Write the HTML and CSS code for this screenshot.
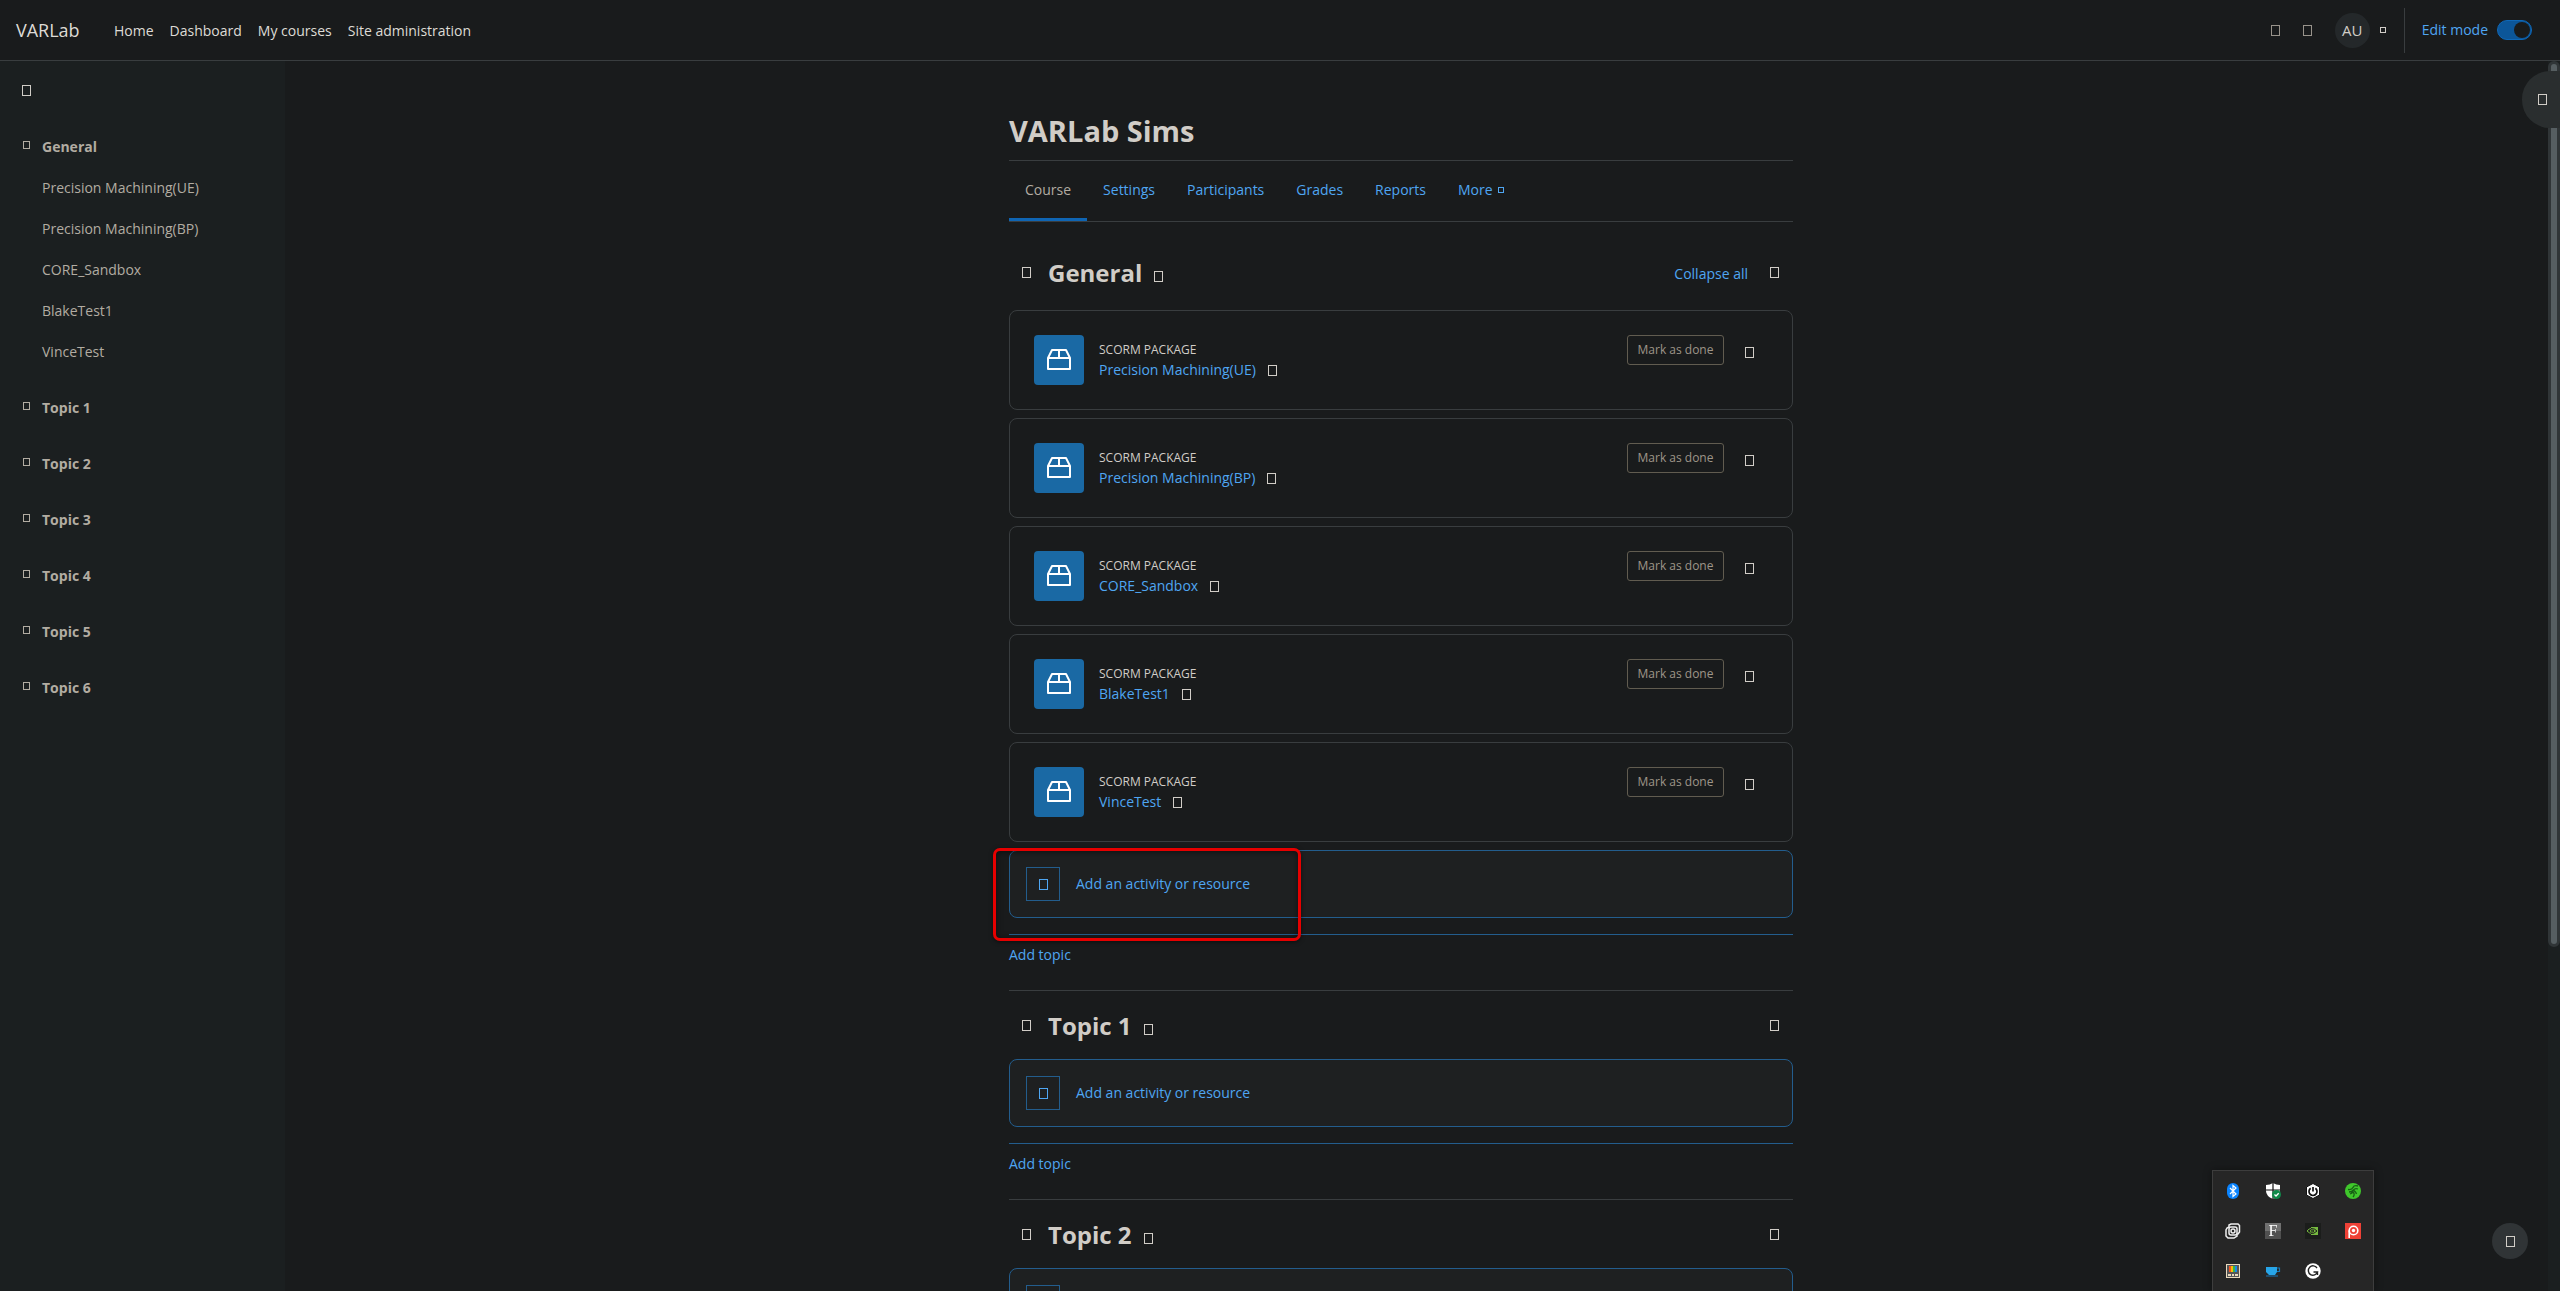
FILE: index.html
```html
<!DOCTYPE html>
<html lang="en">
<head>
<meta charset="utf-8">
<title>VARLab Sims</title>
<link rel="stylesheet" href="styles.css">
</head>
<body>
<svg class="defs" aria-hidden="true">
  <symbol id="package" viewBox="0 0 24 24">
    <path d="M1 10 5 2H19L23 10V21H1ZM1 10H23M12 2V10" fill="none" stroke="#fff" stroke-width="2" stroke-linejoin="round"/>
  </symbol>
</svg>

<header class="navbar">
  <a class="brand" href="#">VARLab</a>
  <nav class="primary">
    <a href="#">Home</a>
    <a href="#">Dashboard</a>
    <a href="#">My courses</a>
    <a href="#">Site administration</a>
  </nav>
  <div class="usertools">
    <button class="plain" aria-label="Notifications"><span class="glyph dim"></span></button>
    <button class="plain" aria-label="Messages"><span class="glyph dim"></span></button>
    <button class="plain user" aria-label="User menu"><span class="avatar">AU</span><span class="glyph tiny"></span></button>
  </div>
  <div class="editmode">
    <label for="editmode">Edit mode</label>
    <input id="editmode" class="switch" type="checkbox" role="switch" checked>
  </div>
</header>

<div class="layout">
  <aside class="index">
    <div class="index-head"><button class="plain" aria-label="Close course index"><span class="glyph"></span></button></div>
    <nav>
      <section>
        <h2><span class="glyph small"></span><a href="#general">General</a></h2>
        <a class="item" href="#">Precision Machining(UE)</a>
        <a class="item" href="#">Precision Machining(BP)</a>
        <a class="item" href="#">CORE_Sandbox</a>
        <a class="item" href="#">BlakeTest1</a>
        <a class="item" href="#">VinceTest</a>
      </section>
      <section><h2><span class="glyph small"></span><a href="#topic1">Topic 1</a></h2></section>
      <section><h2><span class="glyph small"></span><a href="#topic2">Topic 2</a></h2></section>
      <section><h2><span class="glyph small"></span><a href="#">Topic 3</a></h2></section>
      <section><h2><span class="glyph small"></span><a href="#">Topic 4</a></h2></section>
      <section><h2><span class="glyph small"></span><a href="#">Topic 5</a></h2></section>
      <section><h2><span class="glyph small"></span><a href="#">Topic 6</a></h2></section>
    </nav>
  </aside>

  <main class="page">
    <div class="content">
      <h1>VARLab Sims</h1>
      <nav class="tabs">
        <a class="active" href="#">Course</a>
        <a href="#">Settings</a>
        <a href="#">Participants</a>
        <a href="#">Grades</a>
        <a href="#">Reports</a>
        <a href="#">More<span class="glyph tiny"></span></a>
      </nav>

      <section class="topic first" id="general">
        <div class="topic-head">
          <button class="plain" aria-label="Collapse"><span class="glyph"></span></button>
          <h2>General</h2>
          <button class="plain edit" aria-label="Edit section name"><span class="glyph"></span></button>
          <a class="collapse" href="#">Collapse all</a>
          <button class="plain menu" aria-label="Section menu"><span class="glyph"></span></button>
        </div>
        <ul class="activities">
          <li class="activity">
            <span class="tile"><svg><use href="#package"/></svg></span>
            <div class="about"><span class="kind">SCORM PACKAGE</span><span class="name"><a href="#">Precision Machining(UE)</a><button class="plain" aria-label="Edit title"><span class="glyph"></span></button></span></div>
            <button class="done">Mark as done</button>
            <button class="plain more" aria-label="Activity menu"><span class="glyph"></span></button>
          </li>
          <li class="activity">
            <span class="tile"><svg><use href="#package"/></svg></span>
            <div class="about"><span class="kind">SCORM PACKAGE</span><span class="name"><a href="#">Precision Machining(BP)</a><button class="plain" aria-label="Edit title"><span class="glyph"></span></button></span></div>
            <button class="done">Mark as done</button>
            <button class="plain more" aria-label="Activity menu"><span class="glyph"></span></button>
          </li>
          <li class="activity">
            <span class="tile"><svg><use href="#package"/></svg></span>
            <div class="about"><span class="kind">SCORM PACKAGE</span><span class="name"><a href="#">CORE_Sandbox</a><button class="plain" aria-label="Edit title"><span class="glyph"></span></button></span></div>
            <button class="done">Mark as done</button>
            <button class="plain more" aria-label="Activity menu"><span class="glyph"></span></button>
          </li>
          <li class="activity">
            <span class="tile"><svg><use href="#package"/></svg></span>
            <div class="about"><span class="kind">SCORM PACKAGE</span><span class="name"><a href="#">BlakeTest1</a><button class="plain" aria-label="Edit title"><span class="glyph"></span></button></span></div>
            <button class="done">Mark as done</button>
            <button class="plain more" aria-label="Activity menu"><span class="glyph"></span></button>
          </li>
          <li class="activity">
            <span class="tile"><svg><use href="#package"/></svg></span>
            <div class="about"><span class="kind">SCORM PACKAGE</span><span class="name"><a href="#">VinceTest</a><button class="plain" aria-label="Edit title"><span class="glyph"></span></button></span></div>
            <button class="done">Mark as done</button>
            <button class="plain more" aria-label="Activity menu"><span class="glyph"></span></button>
          </li>
        </ul>
        <div class="add-wrap">
          <button class="add"><span class="plus"><span class="glyph"></span></span>Add an activity or resource</button>
          <div class="highlight"></div>
        </div>
        <div class="add-topic"><a href="#">Add topic</a></div>
      </section>

      <section class="topic" id="topic1">
        <div class="topic-head">
          <button class="plain" aria-label="Collapse"><span class="glyph"></span></button>
          <h2>Topic 1</h2>
          <button class="plain edit" aria-label="Edit section name"><span class="glyph"></span></button>
          <button class="plain menu" aria-label="Section menu"><span class="glyph"></span></button>
        </div>
        <button class="add"><span class="plus"><span class="glyph"></span></span>Add an activity or resource</button>
        <div class="add-topic"><a href="#">Add topic</a></div>
      </section>

      <section class="topic" id="topic2">
        <div class="topic-head">
          <button class="plain" aria-label="Collapse"><span class="glyph"></span></button>
          <h2>Topic 2</h2>
          <button class="plain edit" aria-label="Edit section name"><span class="glyph"></span></button>
          <button class="plain menu" aria-label="Section menu"><span class="glyph"></span></button>
        </div>
        <button class="add" aria-label="Add an activity or resource"><span class="plus"><span class="glyph"></span></span></button>
      </section>
    </div>
  </main>
  <div class="scroll"><div class="thumb"></div></div>
  <button class="blocks" aria-label="Open block drawer"><span class="glyph"></span></button>
</div>

<button class="help" aria-label="Help"><span class="glyph"></span></button>

<div class="tray">
  <svg viewBox="0 0 16 16"><rect x="2" width="12" height="16" rx="6" fill="#0a84ff"/><path d="M5 5 11 11 8 13.500V2.500L11 5 5 11" fill="none" stroke="#fff" stroke-width="1.200"/></svg>
  <svg viewBox="0 0 16 16"><path d="M8 0Q11 2 15 2V8Q15 13 8 16 1 13 1 8V2Q5 2 8 0Z" fill="#fff"/><path d="M8 0V16M1 7H15" stroke="#111" stroke-width="1.200"/><circle cx="11.500" cy="11.500" r="4.500" fill="#108a4a"/><path d="M9.500 11.500 11 13 13.700 10.200" fill="none" stroke="#fff" stroke-width="1.300"/></svg>
  <svg viewBox="0 0 16 16"><path d="M8 .5 14.500 4V12L8 15.500 1.500 12V4Z" fill="#fff" stroke="#111"/><path d="M5.600 5.300A4 4 0 1 0 10.400 5.300M8 4V8.500" fill="none" stroke="#111" stroke-width="1.700"/></svg>
  <svg viewBox="0 0 16 16"><circle cx="8" cy="8" r="8" fill="#3fc72b"/><path d="M3 6.500Q7 7 8 4.500T13 3M4 9Q7 9 8.500 7T13 6M5 11Q8 10 8 8M9 7.500Q11 9 11.500 11M8.500 9Q10 12 8 14" fill="none" stroke="#176015" stroke-width="1.300"/></svg>
  <svg viewBox="0 0 16 16" fill="none" stroke="#eee" stroke-width="1.500"><path d="M4 4V2L6 1H13L14.500 2.500V9L13 11H12M4 4 2 5 1 7V13L3 15H9L12 13V11"/><rect x="4" y="4" width="8" height="8" rx="2"/><circle cx="8" cy="8" r="2"/></svg>
  <span class="font-icon">F</span>
  <svg viewBox="0 0 16 16"><rect width="16" height="16" fill="#1b1d1b"/><path d="M6 4H13V12H6Z" fill="#76b93f"/><path d="M2 8Q6 3 11 7.500 7 13 2 8ZM5 8Q7 5.500 9 8 7 10.500 5 8" fill="none" stroke="#76b93f"/><path d="M6 5.500Q10 5.500 12 8 9 11 6 10.500M6 7.200Q8 7 9 8 8 9 6 9" fill="none" stroke="#1b1d1b"/></svg>
  <svg viewBox="0 0 16 16"><rect width="16" height="16" fill="#ef4136"/><circle cx="8.500" cy="7.500" r="4.300" fill="none" stroke="#fff" stroke-width="1.600"/><circle cx="8.500" cy="7.500" r="1.700" fill="#fff"/><path d="M4.200 7.500V15" stroke="#fff" stroke-width="1.600"/></svg>
  <svg viewBox="0 0 16 16"><rect x="1.500" y="1.500" width="13" height="13" fill="#555" stroke="#e8d9bd"/><path d="M4 3H6V9H4Z" fill="#f4511e"/><path d="M6 3H8V9H6Z" fill="#fbbc04"/><path d="M8 3H10V9H8Z" fill="#39b54a"/><path d="M10 3H12V9H10Z" fill="#1e88e5"/><path d="M3 12H6M7 12H9M10 12H13" stroke="#e8d9bd" stroke-width="2"/></svg>
  <svg viewBox="0 0 16 16"><path d="M1 4H12V9L10 12H4L1 9Z" fill="#27a5e8"/><path d="M12 5H14.500V8.500H12M1 13H13" fill="none" stroke="#1677b5" stroke-width="1.200"/></svg>
  <svg viewBox="0 0 16 16"><circle cx="8" cy="8" r="7.700" fill="#fff"/><path d="M12 5A4.700 4.700 0 1 0 12.500 9H8.500M12.500 9V12" fill="none" stroke="#222" stroke-width="1.400"/></svg>
</div>
</body>
</html>
```
FILE: styles.css
```css
* { box-sizing: border-box; }

:root {
  --bg: #191b1c;
  --panel: #1b1f20;
  --line: #393d3f;
  --text: #d1cdc7;
  --muted: #b2aca2;
  --link: #4fa6f2;
  --link-line: #235d8d;
}

body {
  margin: 0;
  height: 100vh;
  display: flex;
  flex-direction: column;
  overflow: hidden;
  background: var(--bg);
  color: var(--text);
  font: 14px/22px "Segoe UI", "Open Sans", "Noto Sans", sans-serif;
}

a { color: var(--link); text-decoration: none; }
button { font: inherit; color: inherit; cursor: pointer; }
h1, h2, ul { margin: 0; padding: 0; }
.defs { display: none; }

.plain { display: flex; align-items: center; padding: 0; border: 0; background: none; }

.glyph { display: block; flex: none; width: 9px; height: 11px; border: 1px solid currentColor; }
.glyph.small { width: 7px; height: 8px; margin-bottom: 3px; }
.glyph.tiny { width: 6px; height: 6px; }
.glyph.dim { color: #98938b; }

/* Top bar */
.navbar {
  flex: none;
  display: flex;
  align-items: center;
  height: 61px;
  padding: 0 28px 0 16px;
  border-bottom: 1px solid var(--line);
}
.navbar a { color: #dedbd6; }
.navbar .brand { width: 98px; font-size: 18px; }
.primary { display: flex; gap: 16px; padding-top: 1px; }
.usertools { display: flex; align-items: center; gap: 23px; margin-left: auto; }
.user { gap: 10px; }
.avatar {
  width: 35px;
  height: 35px;
  border-radius: 50%;
  background: #24282a;
  font-size: 15px;
  line-height: 35px;
  text-align: center;
}
.editmode {
  display: flex;
  align-items: center;
  gap: 9px;
  height: 45px;
  margin-left: 18px;
  padding-left: 17px;
  border-left: 1px solid var(--line);
  color: var(--link);
}
.switch {
  appearance: none;
  display: flex;
  justify-content: flex-end;
  width: 35px;
  height: 20px;
  margin: 0;
  padding: 1px;
  border: 1px solid #0f68b8;
  border-radius: 10px;
  background: #0c5699;
}
.switch::before { content: ""; width: 16px; height: 16px; border-radius: 50%; background: var(--bg); }

/* Page columns */
.layout { flex: 1; min-height: 0; display: flex; position: relative; }

.index { flex: none; width: 285px; background: var(--panel); color: var(--muted); }
.index-head { display: flex; align-items: center; height: 65px; padding: 0 22px 6px; color: var(--text); }
.index section { margin-bottom: 15px; }
.index h2 { display: flex; align-items: center; gap: 12px; height: 41px; padding-left: 23px; font-size: 14px; }
.index a { color: inherit; }
.index .item { display: block; padding-left: 42px; line-height: 41px; }

.page { flex: 1; min-width: 0; overflow: hidden; padding: 49px 31px 0 0; }
.content { max-width: 784px; margin: 0 auto; }
h1 { height: 51px; border-bottom: 1px solid var(--line); font-size: 29px; line-height: 42px; }

.tabs { display: flex; border-bottom: 1px solid var(--line); }
.tabs a { display: flex; align-items: center; gap: 5px; height: 60px; padding: 0 16px; border-bottom: 3px solid transparent; }
.tabs .active { border-color: #0f65b3; color: var(--muted); }

/* Sections */
.topic { border-top: 1px solid var(--line); }
.topic.first { border-top: 0; }
.topic-head { display: flex; align-items: center; height: 68px; padding: 0 14px 0 13px; }
.topic.first .topic-head { height: 88px; padding-top: 12px; }
.topic h2 { margin-left: 17px; padding-top: 2px; font-size: 24px; line-height: 32px; }
.topic .edit { margin: 8px 0 0 12px; }
.menu { margin-left: auto; }
.collapse { margin-left: auto; padding-top: 3px; }
.collapse + .menu { margin-left: 22px; }

.activities { display: flex; flex-direction: column; gap: 8px; margin-bottom: 8px; list-style: none; }
.activity {
  display: flex;
  align-items: flex-start;
  height: 100px;
  padding: 24px 38px 0 24px;
  border: 1px solid var(--line);
  border-radius: 8px;
}
.tile { display: flex; align-items: center; justify-content: center; width: 50px; height: 50px; border-radius: 4px; background: #1a69a4; }
.tile svg { width: 24px; height: 24px; }
.about { display: flex; flex-direction: column; flex: 1; margin-left: 15px; padding-top: 5px; }
.kind { font-size: 12px; line-height: 20px; }
.name { display: flex; gap: 12px; line-height: 20px; }
.done {
  width: 97px;
  height: 30px;
  padding: 0;
  border: 1px solid #615c50;
  border-radius: 3px;
  background: none;
  color: #9e9589;
  font-size: 12px;
}
.more { margin: 12px 0 0 21px; }

.add-wrap { position: relative; }
.add {
  display: flex;
  align-items: center;
  gap: 16px;
  width: 100%;
  height: 68px;
  padding: 0 16px;
  border: 1px solid var(--link-line);
  border-radius: 8px;
  background: #1e2021;
  color: var(--link);
}
.plus { display: flex; align-items: center; justify-content: center; width: 34px; height: 34px; border: 1px solid var(--link-line); }
.highlight {
  position: absolute;
  left: -16px;
  top: -2px;
  width: 308px;
  height: 93px;
  border: 3px solid #e60000;
  border-radius: 7px;
  box-shadow: 0 1px 4px #0008, inset 0 1px 6px #0008;
}
.add-topic { height: 56px; margin-top: 16px; padding-top: 9px; border-top: 1px solid var(--link-line); }

/* Scroll bar and floating pieces */
.scroll { flex: none; width: 12px; background: var(--panel); }
.thumb { height: 72%; border: 3px solid #303537; border-radius: 6px; background: #565e61; }
.blocks {
  position: absolute;
  right: 0;
  top: 10px;
  width: 38px;
  height: 57px;
  padding: 0 0 0 16px;
  border: 0;
  border-radius: 28px 0 0 28px;
  background: #2a2e2f;
}
.help {
  position: fixed;
  right: 32px;
  bottom: 32px;
  display: flex;
  align-items: center;
  justify-content: center;
  width: 36px;
  height: 36px;
  padding: 0;
  border: 0;
  border-radius: 50%;
  background: #303436;
}
.tray {
  position: fixed;
  right: 186px;
  bottom: 0;
  display: grid;
  grid-template-columns: repeat(4, 40px);
  grid-auto-rows: 40px;
  place-items: center;
  border: 1px solid #3d3d3d;
  border-bottom: 0;
  background: #262626;
  box-shadow: 0 0 8px #0006;
}
.tray svg, .font-icon { width: 16px; height: 16px; }
.font-icon {
  background: linear-gradient(#707070 50%, #505050 50%);
  color: #fff;
  font: 16px/16px "Liberation Serif", serif;
  text-align: center;
}
```
